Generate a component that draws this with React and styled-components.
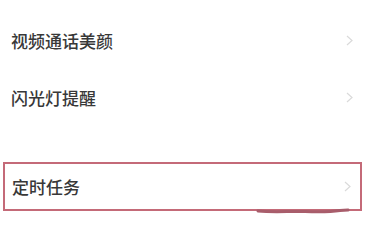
import React from "react";
import styled, { createGlobalStyle } from "styled-components";

const GlobalStyle = createGlobalStyle`
  body {
    margin: 0;
    background: #fff;
    font-family: "Noto Sans CJK SC", "Noto Sans", sans-serif;
  }
`;

const Page = styled.div`
  width: 373px;
  height: 244px;
  overflow: hidden;
  padding-top: 12px;
  box-sizing: border-box;
`;

const Group = styled.div`
  display: flex;
  flex-direction: column;
  margin-bottom: ${(p) => p.gap || 0}px;
`;

const Row = styled.div`
  position: relative;
  display: flex;
  align-items: center;
  justify-content: space-between;
  box-sizing: border-box;
  height: ${(p) => (p.marked ? 49 : 57)}px;
  margin: ${(p) => (p.marked ? "0 11px 0 3px" : "0")};
  padding: ${(p) => (p.marked ? "0 9px 0 7px" : "0 20px 0 11px")};
  border: ${(p) => (p.marked ? "2px solid #c46a78" : "none")};
`;

const Label = styled.span`
  font-size: 17px;
  font-weight: 500;
  color: #383838;
`;

const Chevron = styled.svg`
  width: 7px;
  height: 11px;
  flex: none;
`;

const Scribble = styled.svg`
  position: absolute;
  left: 250px;
  bottom: -5px;
  width: 96px;
  height: 6px;
  overflow: visible;
`;

const Arrow = () => (
  <Chevron viewBox="0 0 7 11">
    <path d="M1 1 L6 5.5 L1 10" fill="none" stroke="#dadada" strokeWidth="1.2" />
  </Chevron>
);

const App = () => (
  <>
    <GlobalStyle />
    <Page>
      <Group gap={36}>
        <Row>
          <Label>视频通话美颜</Label>
          <Arrow />
        </Row>
        <Row>
          <Label>闪光灯提醒</Label>
          <Arrow />
        </Row>
      </Group>
      <Group>
        <Row marked>
          <Label>定时任务</Label>
          <Arrow />
          <Scribble viewBox="0 0 96 6">
            <path
              d="M3 3 C20 4.5 35 3 50 3.5 C65 4 75 4 85 2.5 L93 2"
              fill="none"
              stroke="#a85d6b"
              strokeWidth="3"
              strokeLinecap="round"
            />
          </Scribble>
        </Row>
      </Group>
    </Page>
  </>
);

export default App;
